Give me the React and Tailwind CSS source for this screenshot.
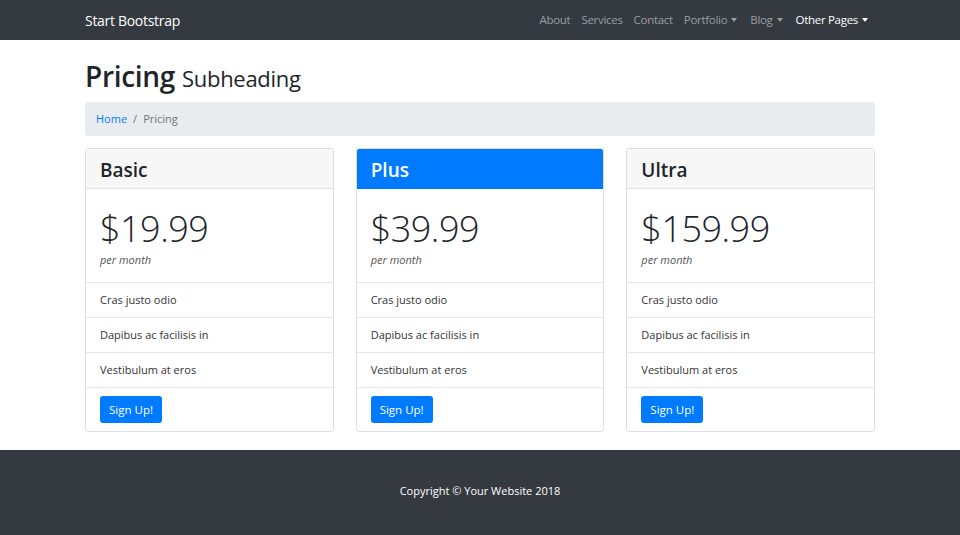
import React from 'react';

const NAV = [
    { label: 'About' },
    { label: 'Services' },
    { label: 'Contact' },
    { label: 'Portfolio', caret: true },
    { label: 'Blog', caret: true },
    { label: 'Other Pages', caret: true, active: true },
];

const PLANS = [
    { name: 'Basic', price: '$19.99' },
    { name: 'Plus', price: '$39.99', featured: true },
    { name: 'Ultra', price: '$159.99' },
];

const FEATURES = ['Cras justo odio', 'Dapibus ac facilisis in', 'Vestibulum at eros'];

function Caret() {
    return <span className="ml-[4px] mr-[2px] inline-block w-0 h-0 border-l-[3px] border-r-[3px] border-t-[4px] border-l-transparent border-r-transparent border-t-current align-middle" />;
}

function PlanCard({ plan }) {
    return (
        <div className="flex flex-col bg-white border border-[#dfdfdf] rounded-[3px] overflow-hidden">
            {/* Header */}
            <div className={`h-[40px] flex items-center px-[14px] pt-[3px] border-b ${plan.featured ? 'bg-[#007bff] border-[#007bff] text-white' : 'bg-[#f7f7f7] border-[#dfdfdf] text-[#212529]'}`}>
                <h4 className="text-[19px] font-semibold">{plan.name}</h4>
            </div>

            {/* Price */}
            <div className="h-[94px] px-[14px] pt-[20px] border-b border-[#e6e6e6]">
                <div className="text-[36px] font-light leading-[40px] text-[#212529] tracking-[-0.5px]">{plan.price}</div>
                <div className="mt-[3px] text-[11px] italic text-[#555] leading-[16px]">per month</div>
            </div>

            {/* Features */}
            {FEATURES.map((f) => (
                <div key={f} className="h-[35px] flex items-center px-[14px] border-b border-[#e6e6e6] text-[11px] text-[#333]">
                    {f}
                </div>
            ))}

            {/* Footer */}
            <div className="px-[14px] pt-[8px] pb-[8px]">
                <button className="h-[27px] px-[9px] rounded-[3px] bg-[#007bff] text-white text-[11.5px]">Sign Up!</button>
            </div>
        </div>
    );
}

export default function App() {
    return (
        <div className="min-h-[535px] flex flex-col bg-white" style={{ fontFamily: '"Open Sans", "Noto Sans", sans-serif' }}>
            {/* Navbar */}
            <nav className="h-[40px] bg-[#343a40] shrink-0">
                <div className="w-[790px] mx-auto h-full flex items-center justify-between">
                    <span className="text-white text-[14px] font-medium tracking-[-0.3px]">Start Bootstrap</span>
                    <ul className="flex items-center gap-[11px] text-[11.5px] tracking-[-0.3px] mr-[5px]">
                        {NAV.map((item) => (
                            <li key={item.label} className={`flex items-center ${item.active ? 'text-white' : 'text-[#9a9da0]'}`}>
                                {item.label}
                                {item.caret && <Caret />}
                            </li>
                        ))}
                    </ul>
                </div>
            </nav>

            {/* Content */}
            <main className="w-[790px] mx-auto">
                <h1 className="mt-[17px] mb-[7px] h-[38px] flex items-baseline gap-[7px] leading-[38px] text-[#212529] tracking-[-0.3px]">
                    <span className="text-[28px] font-semibold">Pricing</span>
                    <span className="text-[22px]">Subheading</span>
                </h1>

                <ol className="h-[34px] flex items-center px-[11px] bg-[#e9ecef] rounded-[3px] text-[11px] mb-[12px]">
                    <li className="text-[#007bff]">Home</li>
                    <li className="text-[#6c757d] px-[6px]">/</li>
                    <li className="text-[#6c757d]">Pricing</li>
                </ol>

                <div className="grid grid-cols-3 gap-[22px]">
                    {PLANS.map((p) => <PlanCard key={p.name} plan={p} />)}
                </div>
            </main>

            {/* Footer */}
            <footer className="mt-[18px] flex-1 bg-[#343a40] flex items-center justify-center pb-[2px]">
                <p className="text-white text-[11px]">Copyright © Your Website 2018</p>
            </footer>
        </div>
    );
}
